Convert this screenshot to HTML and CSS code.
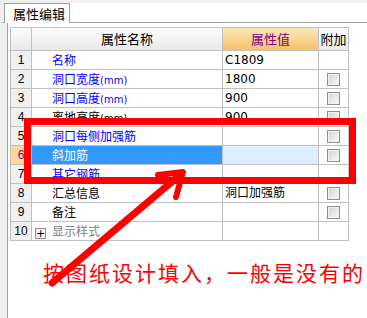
FILE: index.html
```html
<!DOCTYPE html>
<html lang="zh-CN">
  <head>
    <meta charset="UTF-8" />
    <title>属性编辑</title>
    <link rel="stylesheet" href="styles.css">
  </head>
  <body>
    <div class="window">
      <!-- 标签栏 -->
      <div class="tabbar">
        <div class="tab">属性编辑</div>
      </div>
      <!-- 属性表 -->
      <div class="pane">
        <div class="grid">
          <div class="hd"></div>
          <div class="hd">属性名称</div>
          <div class="hd hd-val">属性值</div>
          <div class="hd">附加</div>

          <div class="num">1</div>
          <div class="name blue">名称</div>
          <div class="val">C1809</div>
          <div class="add"></div>

          <div class="num">2</div>
          <div class="name blue">洞口宽度<span class="unit">(mm)</span></div>
          <div class="val">1800</div>
          <div class="add"><span class="chk"></span></div>

          <div class="num">3</div>
          <div class="name blue">洞口高度<span class="unit">(mm)</span></div>
          <div class="val">900</div>
          <div class="add"><span class="chk"></span></div>

          <div class="num">4</div>
          <div class="name">离地高度<span class="unit">(mm)</span></div>
          <div class="val">900</div>
          <div class="add"><span class="chk"></span></div>

          <div class="num">5</div>
          <div class="name blue">洞口每侧加强筋</div>
          <div class="val"></div>
          <div class="add"><span class="chk"></span></div>

          <div class="num num-sel">6</div>
          <div class="name name-sel">斜加筋</div>
          <div class="val val-sel"></div>
          <div class="add"><span class="chk"></span></div>

          <div class="num">7</div>
          <div class="name blue">其它钢筋</div>
          <div class="val"></div>
          <div class="add"></div>

          <div class="num">8</div>
          <div class="name">汇总信息</div>
          <div class="val">洞口加强筋</div>
          <div class="add"><span class="chk"></span></div>

          <div class="num">9</div>
          <div class="name">备注</div>
          <div class="val"></div>
          <div class="add"><span class="chk"></span></div>

          <div class="num">10</div>
          <div class="name gray"><span class="plus">+</span>显示样式</div>
          <div class="val"></div>
          <div class="add"></div>
        </div>
        <p class="note">按图纸设计填入，一般是没有的</p>
      </div>

      <!-- 红框和箭头标注 -->
      <div class="mark"></div>
      <svg class="arrow" width="367" height="318" viewBox="0 0 367 318">
        <line x1="52" y1="283" x2="180" y2="175" stroke="#ff0000" stroke-width="7" stroke-linecap="round" />
        <polyline points="158,175 183,172 176,197" fill="none" stroke="#ff0000" stroke-width="6" stroke-linecap="round" stroke-linejoin="round" />
      </svg>
    </div>
  </body>
</html>
```

FILE: styles.css
```css
* {
  margin: 0;
  padding: 0;
  box-sizing: border-box;
}
body {
  font-family: "Noto Sans CJK SC", sans-serif;
  font-size: 12px;
  background: #fff;
  overflow: hidden;
}
.window {
  position: relative;
  width: 367px;
  height: 318px;
  background: #f0f0f0;
}
/* 标签栏 */
.tabbar {
  height: 23px;
  padding-top: 3px;
  border-left: 4px solid #f0f0f0;
  border-bottom: 1px solid #a0a0a0;
  background: linear-gradient(#f0f0f0 3px, #fff 3px);
}
.tab {
  width: 66px;
  height: 20px;
  border: 1px solid #a0a0a0;
  border-bottom: none;
  background: #fff;
  font-size: 13px;
  line-height: 19px;
  padding-left: 8px;
  color: #000;
}
/* 内容区 */
.pane {
  height: 295px;
  margin-left: 7px;
  border-left: 1px solid #a0a0a0;
  background: #fff;
  padding: 4px 0 0 2px;
}
.grid {
  display: grid;
  grid-template-columns: 20px 190px 95px 29px;
  grid-template-rows: 22px;
  grid-auto-rows: 18px;
  gap: 1px;
  padding: 1px;
  width: 339px;
  background: #c0c0c0;
}
.grid > div {
  background: #fff;
  white-space: nowrap;
  overflow: hidden;
  line-height: 18px;
}
/* 表头 */
.grid .hd {
  background: linear-gradient(#fcfcfc, #e9e9e9);
  font-size: 13px;
  line-height: 22px;
  text-align: center;
}
.grid .hd-val {
  background: linear-gradient(#fde7bd, #f4c269);
  color: #800080;
}
/* 序号列 */
.grid .num {
  background: #f0f0f0;
  font-family: "Liberation Sans", sans-serif;
  font-size: 12px;
  text-align: center;
}
.grid .num-sel {
  background: #fcd89c;
  color: #800080;
}
.grid .name {
  padding-left: 20px;
}
.grid .blue {
  color: #0000ff;
}
.grid .gray {
  color: #808080;
  padding-left: 3px;
}
.grid .name-sel {
  background: #3399ff;
  color: #fff;
}
.grid .val {
  padding-left: 2px;
  font-family: "DejaVu Sans", "Noto Sans CJK SC", sans-serif;
}
.grid .val-sel {
  background: #deeeff;
}
.unit {
  font-family: "DejaVu Sans", sans-serif;
  font-size: 10px;
}
.grid .add {
  display: flex;
  align-items: center;
  justify-content: center;
}
/* 复选框 */
.chk {
  width: 13px;
  height: 13px;
  border: 1px solid #8e8e8e;
  background: linear-gradient(135deg, #d2d2d2, #fbfbfb);
  box-shadow: inset 0 0 0 1px #f2f2f2;
}
.plus {
  display: inline-block;
  width: 11px;
  height: 11px;
  margin-right: 6px;
  border: 1px solid #8e8e8e;
  background: #f4f4f4;
  color: #000;
  font-family: "DejaVu Sans", sans-serif;
  font-size: 11px;
  line-height: 9px;
  text-align: center;
  vertical-align: -1px;
}
/* 红字说明 */
.note {
  margin: 19px 0 0 33px;
  color: #ff0000;
  font-size: 21px;
  line-height: 24px;
  letter-spacing: 2px;
  white-space: nowrap;
}
/* 红框 */
.mark {
  position: absolute;
  left: 24px;
  top: 118px;
  width: 332px;
  height: 66px;
  border: 7px solid #ff0000;
}
.arrow {
  position: absolute;
  left: 0;
  top: 0;
  pointer-events: none;
}
```
